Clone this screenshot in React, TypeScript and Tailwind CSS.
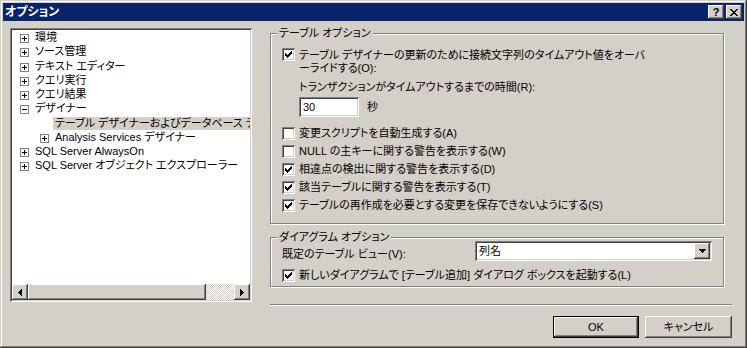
import React from "react";

const raised =
  "shadow-[inset_-1px_-1px_#404040,inset_1px_1px_#ffffff,inset_-2px_-2px_#808080,inset_2px_2px_#d4d0c8]";
const sunken =
  "shadow-[inset_1px_1px_#808080,inset_-1px_-1px_#ffffff,inset_2px_2px_#404040,inset_-2px_-2px_#d4d0c8]";
const etched = "border border-[#808080] shadow-[1px_1px_0_#ffffff,inset_1px_1px_0_#ffffff]";

const CheckBox = ({ checked }: { checked?: boolean }) => (
  <span className={`w-[13px] h-[13px] shrink-0 bg-white flex items-center justify-center ${sunken}`}>
    {checked && (
      <svg width="7" height="7" viewBox="0 0 7 7" shapeRendering="crispEdges">
        <path
          d="M6 0h1v1h-1z M5 1h2v1h-2z M0 2h1v1h-1z M4 2h3v1h-3z M0 3h2v1h-2z M3 3h3v1h-3z M0 4h5v1h-5z M1 5h3v1h-3z M2 6h1v1h-1z"
          fill="#000"
        />
      </svg>
    )}
  </span>
);

const TreeBox = ({ open }: { open?: boolean }) => (
  <span className="w-[9px] h-[9px] shrink-0 border border-[#808080] bg-white flex items-center justify-center mt-[3px]">
    <svg width="5" height="5" viewBox="0 0 5 5" shapeRendering="crispEdges">
      <path d="M0 2h5v1h-5z" fill="#000" />
      {!open && <path d="M2 0h1v5h-1z" fill="#000" />}
    </svg>
  </span>
);

type Node = { label: string; level: number; box?: "+" | "-"; selected?: boolean };

const tree: Node[] = [
  { label: "環境", level: 0, box: "+" },
  { label: "ソース管理", level: 0, box: "+" },
  { label: "テキスト エディター", level: 0, box: "+" },
  { label: "クエリ実行", level: 0, box: "+" },
  { label: "クエリ結果", level: 0, box: "+" },
  { label: "デザイナー", level: 0, box: "-" },
  { label: "テーブル デザイナーおよびデータベース デザイナー", level: 1, selected: true },
  { label: "Analysis Services デザイナー", level: 1, box: "+" },
  { label: "SQL Server AlwaysOn", level: 0, box: "+" },
  { label: "SQL Server オブジェクト エクスプローラー", level: 0, box: "+" },
];

const options = [
  { label: "変更スクリプトを自動生成する(A)", checked: false },
  { label: "NULL の主キーに関する警告を表示する(W)", checked: false },
  { label: "相違点の検出に関する警告を表示する(D)", checked: true },
  { label: "該当テーブルに関する警告を表示する(T)", checked: true },
  { label: "テーブルの再作成を必要とする変更を保存できないようにする(S)", checked: true },
];

export default function App() {
  return (
    <div
      className={`w-[747px] h-[348px] bg-[#d4d0c8] p-[3px] flex flex-col text-black text-[11px] leading-[13px] font-['Liberation_Sans','Noto_Sans_CJK_JP',sans-serif] [font-feature-settings:'palt'] shadow-[inset_-1px_-1px_#404040,inset_1px_1px_#d4d0c8,inset_-2px_-2px_#808080,inset_2px_2px_#ffffff]`}
    >
      {/* title bar */}
      <div className="h-[18px] bg-[#0a246a] flex items-center pl-[2px] pr-[2px] shrink-0">
        <span className="text-white font-bold text-[12px] leading-[14px]">オプション</span>
        <div className="ml-auto flex gap-[2px]">
          <span className={`w-[16px] h-[14px] bg-[#d4d0c8] flex items-center justify-center ${raised}`}>
            <span className="font-bold text-[11px] leading-[11px] font-['Liberation_Sans',sans-serif]">?</span>
          </span>
          <span className={`w-[16px] h-[14px] bg-[#d4d0c8] flex items-center justify-center ${raised}`}>
            <svg width="8" height="7" viewBox="0 0 8 7" shapeRendering="crispEdges">
              <path
                d="M0 0h2v1h-2z M6 0h2v1h-2z M1 1h2v1h-2z M5 1h2v1h-2z M2 2h4v1h-4z M3 3h2v1h-2z M2 4h4v1h-4z M1 5h2v1h-2z M5 5h2v1h-2z M0 6h2v1h-2z M6 6h2v1h-2z"
                fill="#000"
              />
            </svg>
          </span>
        </div>
      </div>

      <div className="flex flex-row">
        {/* tree */}
        <div className={`ml-[7px] mt-[7px] w-[242px] h-[274px] bg-white p-[2px] flex flex-col ${sunken}`}>
          <div className="flex-1 overflow-hidden whitespace-nowrap pt-[1px]">
            {tree.map((n) => (
              <div
                key={n.label}
                className={`h-[14.25px] flex items-start ${n.level === 1 ? "pl-[28px]" : "pl-[8px]"}`}
              >
                {n.box ? <TreeBox open={n.box === "-"} /> : <span className="w-[9px] shrink-0" />}
                <span
                  className={`ml-[4px] px-[2px] h-[13px] leading-[13px] ${n.selected ? "bg-[#d4d0c8]" : ""}`}
                >
                  {n.label}
                </span>
              </div>
            ))}
          </div>
          {/* scrollbar */}
          <div className="h-[16px] flex shrink-0">
            <span className={`w-[16px] h-[16px] bg-[#d4d0c8] flex items-center justify-center ${raised}`}>
              <svg width="4" height="7" viewBox="0 0 4 7" shapeRendering="crispEdges">
                <path d="M3 0h1v7h-1z M2 1h1v5h-1z M1 2h1v3h-1z M0 3h1v1h-1z" fill="#000" />
              </svg>
            </span>
            <span className={`w-[178px] h-[16px] bg-[#d4d0c8] ${raised}`} />
            <span className="flex-1 h-[16px] bg-[repeating-conic-gradient(#ffffff_0%_25%,#d4d0c8_0%_50%)] bg-[length:2px_2px]" />
            <span className={`w-[16px] h-[16px] bg-[#d4d0c8] flex items-center justify-center ${raised}`}>
              <svg width="4" height="7" viewBox="0 0 4 7" shapeRendering="crispEdges">
                <path d="M0 0h1v7h-1z M1 1h1v5h-1z M2 2h1v3h-1z M3 3h1v1h-1z" fill="#000" />
              </svg>
            </span>
          </div>
        </div>

        {/* right side */}
        <div className="ml-[18px] w-[462px] flex flex-col">
          {/* table options */}
          <div className={`mt-[12px] w-[454px] flex flex-col pl-[11px] pb-[6px] ${etched}`}>
            <span className="-mt-[8px] -ml-[5px] self-start px-[2px] bg-[#d4d0c8] leading-[14px]">
              テーブル オプション
            </span>
            <div className="mt-[8px] flex items-start gap-[4px]">
              <CheckBox checked />
              <span className="mt-[1px]">
                テーブル デザイナーの更新のために接続文字列のタイムアウト値をオーバ
                <br />
                ーライドする(O):
              </span>
            </div>
            <div className="mt-[6px] pl-[17px]">トランザクションがタイムアウトするまでの時間(R):</div>
            <div className="mt-[3px] pl-[17px] flex items-center">
              <span className={`w-[60px] h-[20px] bg-white pl-[4px] flex items-center ${sunken}`}>30</span>
              <span className="ml-[8px]">秒</span>
            </div>
            <div className="mt-[10px] flex flex-col">
              {options.map((o) => (
                <div key={o.label} className="h-[18px] flex items-start gap-[4px]">
                  <CheckBox checked={o.checked} />
                  <span className="leading-[13px]">{o.label}</span>
                </div>
              ))}
            </div>
          </div>

          {/* diagram options */}
          <div className={`mt-[13px] w-[454px] flex flex-col pl-[11px] pr-[11px] pb-[4px] ${etched}`}>
            <span className="-mt-[8px] -ml-[5px] self-start px-[2px] bg-[#d4d0c8] leading-[14px]">
              ダイアグラム オプション
            </span>
            <div className="-mt-[3px] flex items-start">
              <span className="mt-[7px]">既定のテーブル ビュー(V):</span>
              <div className={`ml-auto w-[237px] h-[20px] bg-white p-[2px] flex ${sunken}`}>
                <span className="flex-1 pl-[2px] leading-[16px]">列名</span>
                <span className={`w-[16px] h-[16px] bg-[#d4d0c8] flex items-center justify-center ${raised}`}>
                  <svg width="7" height="4" viewBox="0 0 7 4" shapeRendering="crispEdges">
                    <path d="M0 0h7v1h-7z M1 1h5v1h-5z M2 2h3v1h-3z M3 3h1v1h-1z" fill="#000" />
                  </svg>
                </span>
              </div>
            </div>
            <div className="mt-[8px] flex items-start gap-[4px]">
              <CheckBox checked />
              <span>新しいダイアグラムで [テーブル追加] ダイアログ ボックスを起動する(L)</span>
            </div>
          </div>

          {/* separator */}
          <div className="mt-[17px] h-[2px] border-t border-[#808080] border-b border-b-white" />

          {/* buttons */}
          <div className="mt-[10px] flex justify-end gap-[6px]">
            <button className="w-[86px] h-[22px] border border-black bg-[#d4d0c8] p-0">
              <span className={`w-full h-full flex items-center justify-center ${raised}`}>OK</span>
            </button>
            <button className={`w-[87px] h-[22px] bg-[#d4d0c8] flex items-center justify-center ${raised}`}>
              キャンセル
            </button>
          </div>
        </div>
      </div>
    </div>
  );
}
